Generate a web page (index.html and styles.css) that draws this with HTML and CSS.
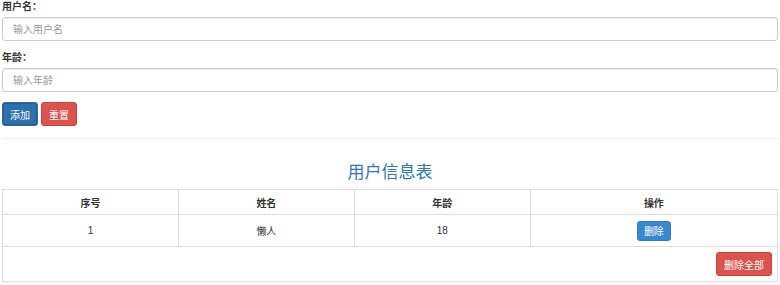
FILE: index.html
```html
<!DOCTYPE html>
<html>
<head>
  <meta charset="utf-8">
  <title>用户信息表</title>
  <link rel="stylesheet" href="styles.css">
</head>
<body>
  <div class="container">
    <div class="form-group">
      <label for="username">用户名：</label>
      <input type="text" id="username" class="form-control" placeholder="输入用户名">
    </div>
    <div class="form-group">
      <label for="age">年龄：</label>
      <input type="text" id="age" class="form-control" placeholder="输入年龄">
    </div>
    <div class="actions">
      <button class="btn btn-primary btn-focus">添加</button>
      <button class="btn btn-danger">重置</button>
    </div>

    <hr>

    <h2 class="title">用户信息表</h2>
    <table class="table">
      <thead>
        <tr>
          <th class="col">序号</th>
          <th class="col">姓名</th>
          <th class="col">年龄</th>
          <th>操作</th>
        </tr>
      </thead>
      <tbody>
        <tr>
          <td>1</td>
          <td>懒人</td>
          <td>18</td>
          <td><button class="btn btn-primary btn-sm">删除</button></td>
        </tr>
        <tr>
          <td colspan="4" class="foot"><button class="btn btn-danger">删除全部</button></td>
        </tr>
      </tbody>
    </table>
  </div>
</body>
</html>
```

FILE: styles.css
```css
body {
  margin: 0;
  font-family: "Liberation Sans", "Noto Sans CJK SC", sans-serif;
  font-size: 10px;
  color: #333;
  background: #fff;
}

.container {
  padding: 0 2px;
}

.form-group {
  margin-bottom: 10px;
}

.form-group label {
  display: block;
  font-weight: bold;
  line-height: 14px;
  margin-bottom: 3px;
}

.form-control {
  display: block;
  box-sizing: border-box;
  width: 100%;
  height: 24px;
  padding: 0 10px;
  font: inherit;
  color: #555;
  border: 1px solid #ccc;
  border-radius: 3px;
  box-shadow: inset 0 1px 1px rgba(0, 0, 0, .075);
}

.form-control::placeholder {
  color: #999;
}

.actions {
  margin-top: 9px;
  display: flex;
  gap: 3px;
}

.btn {
  font: inherit;
  font-size: 10px;
  color: #fff;
  height: 24px;
  padding: 0 7px;
  border: 1px solid transparent;
  border-radius: 3px;
  cursor: pointer;
}

.btn-primary {
  background: #337ab7;
  border-color: #2e6da4;
}

.btn-danger {
  background: #d9534f;
  border-color: #d43f3a;
}

.btn-focus {
  outline: 1px dotted #1d4f7a;
  outline-offset: -2px;
  background: #2e70ab;
}

.btn-sm {
  height: 20px;
  padding: 0 6px;
  background: #3a87cf;
  border-color: #3479bb;
}

hr {
  margin: 12px 0 0;
  border: 0;
  border-top: 1px solid #eee;
}

.title {
  margin: 23px 0 5px;
  text-align: center;
  font-weight: normal;
  font-size: 17px;
  line-height: 22px;
  color: #2f78b1;
}

.table {
  width: 100%;
  border-collapse: collapse;
}

.table th,
.table td {
  border: 1px solid #ddd;
  text-align: center;
  padding: 0 6px;
}

.table th {
  height: 24px;
  font-weight: bold;
}

.table th.col {
  width: 22.7%;
}

.table td {
  height: 31px;
}

.table td.foot {
  height: 34px;
  text-align: right;
  padding-right: 5px;
}
```
